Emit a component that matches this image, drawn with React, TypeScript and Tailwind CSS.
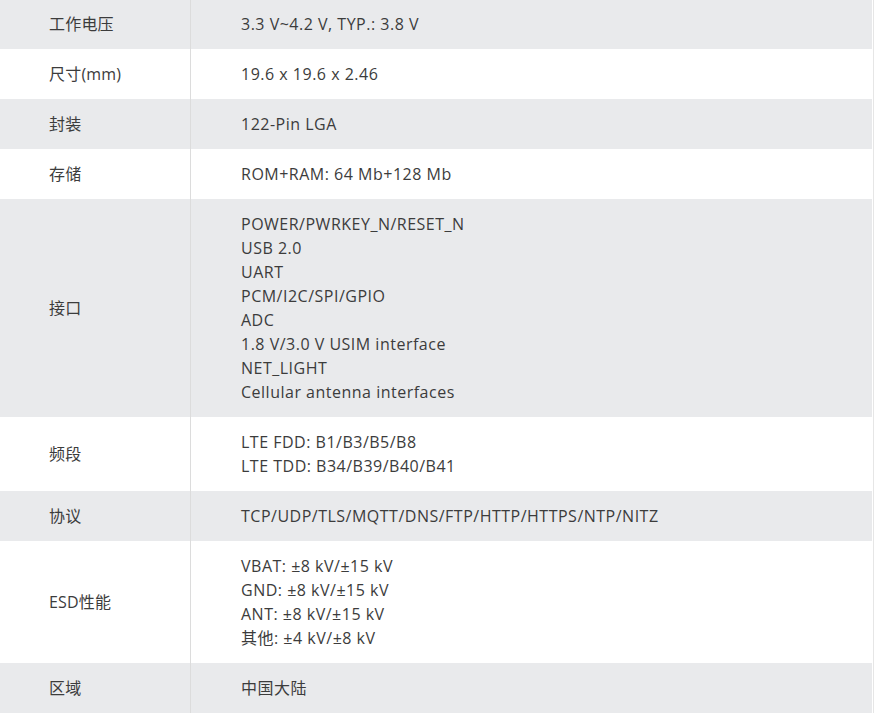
const rows: { label: string; lines: string[] }[] = [
  { label: '工作电压', lines: ['3.3 V~4.2 V, TYP.: 3.8 V'] },
  { label: '尺寸(mm)', lines: ['19.6 x 19.6 x 2.46'] },
  { label: '封装', lines: ['122-Pin LGA'] },
  { label: '存储', lines: ['ROM+RAM: 64 Mb+128 Mb'] },
  {
    label: '接口',
    lines: [
      'POWER/PWRKEY_N/RESET_N',
      'USB 2.0',
      'UART',
      'PCM/I2C/SPI/GPIO',
      'ADC',
      '1.8 V/3.0 V USIM interface',
      'NET_LIGHT',
      'Cellular antenna interfaces',
    ],
  },
  { label: '频段', lines: ['LTE FDD: B1/B3/B5/B8', 'LTE TDD: B34/B39/B40/B41'] },
  { label: '协议', lines: ['TCP/UDP/TLS/MQTT/DNS/FTP/HTTP/HTTPS/NTP/NITZ'] },
  {
    label: 'ESD性能',
    lines: ['VBAT: ±8 kV/±15 kV', 'GND: ±8 kV/±15 kV', 'ANT: ±8 kV/±15 kV', '其他: ±4 kV/±8 kV'],
  },
  { label: '区域', lines: ['中国大陆'] },
]

export default function App() {
  return (
    <div
      className="w-[875px] h-[713px] overflow-hidden bg-white"
      style={{ fontFamily: '"Open Sans", "Noto Sans CJK SC", sans-serif' }}
    >
      <div className="w-[874px] -mt-px border-r border-[#e6e6e6] pr-px">
        {rows.map((r, i) => (
          <div
            key={r.label}
            className={`flex text-[16px] leading-6 text-[#3c3c3c] ${i % 2 === 0 ? 'bg-[#e9eaec]' : 'bg-white'}`}
          >
            <div className="w-[191px] shrink-0 flex items-center pl-[49px] border-r border-[#dcdcdc] py-[13px] tracking-[0.2px]">
              {r.label}
            </div>
            <div className="flex-1 pl-[50px] py-[13px] tracking-[0.5px]">
              {r.lines.map(l => (
                <div key={l}>{l}</div>
              ))}
            </div>
          </div>
        ))}
      </div>
    </div>
  )
}
